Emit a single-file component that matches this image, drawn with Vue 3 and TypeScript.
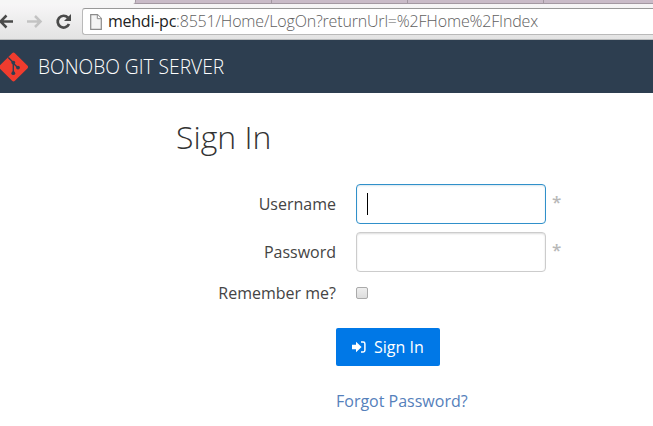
<script setup lang="ts">
import { ref } from 'vue'

const username = ref('')
const password = ref('')
const remember = ref(false)
const host = 'mehdi-pc'
const path = ':8551/Home/LogOn?returnUrl=%2FHome%2FIndex'
</script>

<template>
  <div class="window">
    <div class="tabs"><i class="active"></i><i class="tab"></i><i class="tab"></i><i class="tab"></i></div>
    <div class="toolbar">
      <svg class="nav" viewBox="0 0 80 30" width="80" height="30" fill="none" stroke-linejoin="miter">
        <path d="M13 13.5H1M6.5 7.5L.5 13.5l6 6" stroke="#4a4a4a" stroke-width="2.5" />
        <path d="M27 13.5h13M35 8l5.5 5.5L35 19" stroke="#c3c3c3" stroke-width="2.5" />
        <path d="M68 9.7A5.9 5.9 0 1 0 69 16" stroke="#4a4a4a" stroke-width="2.7" />
        <path d="M71 6v7h-7z" fill="#4a4a4a" />
      </svg>
      <div class="address">
        <svg class="page" viewBox="0 0 12 16" width="12" height="16">
          <path d="M.7.7h6.8l3.8 3.8v10.8H.7z" fill="#f4f4f4" stroke="#8b8b8b" stroke-width="1.2" />
          <path d="M7.3.7v4h4" fill="#fff" stroke="#8b8b8b" />
        </svg>
        <span class="url"><b>{{ host }}</b>{{ path }}</span>
      </div>
    </div>
    <header>
      <svg class="logo" viewBox="0 0 28 30" width="28" height="30">
        <rect x="2.7" y="4.2" width="21.6" height="21.6" rx="2" transform="rotate(45 13.5 15)" fill="#f03c2e" />
        <path d="M8.3 5.6l5 5v10.6M13.3 11.2l4.6 4.6" fill="none" stroke="#2d3e50" stroke-width="1.4" />
        <circle cx="13.3" cy="10.6" r="1.9" fill="#2d3e50" />
        <circle cx="13.3" cy="21.2" r="1.9" fill="#2d3e50" />
        <circle cx="18" cy="15.6" r="1.9" fill="#2d3e50" />
      </svg>
      <span class="brand">BONOBO GIT SERVER</span>
    </header>
    <main>
      <h1>Sign In</h1>
      <form @submit.prevent>
        <div class="row">
          <label for="user"><span>Username</span></label>
          <div class="field focused"><input id="user" v-model="username" type="text" /><i class="caret"></i></div>
          <span class="star">*</span>
        </div>
        <div class="row">
          <label for="pass"><span>Password</span></label>
          <div class="field"><input id="pass" v-model="password" type="password" /></div>
          <span class="star">*</span>
        </div>
        <div class="row check">
          <label for="keep"><span>Remember me?</span></label>
          <input id="keep" v-model="remember" type="checkbox" />
        </div>
        <button type="submit">
          <svg viewBox="0 0 14 12" width="14" height="12">
            <path d="M0 3.8h4V.8L9.6 6 4 11.2v-3H0z" fill="#fff" />
            <path d="M9 1h2.2q1.7 0 1.7 1.7v6.6q0 1.7-1.7 1.7H9" fill="none" stroke="#fff" stroke-width="1.5" />
          </svg>
          <span>Sign In</span>
        </button>
        <a href="#">Forgot Password?</a>
      </form>
    </main>
  </div>
</template>

<style>
body { margin: 0; background: #fff; }
</style>
<style scoped>
* { box-sizing: border-box; }
.window { width: 653px; height: 426px; overflow: hidden; font: 16px/24px "Open Sans", sans-serif; color: #444; background: #fff; }
.tabs { height: 4px; display: flex; background: #c9bbc8; border-bottom: 1px solid #a398a2; }
.active { width: 136px; height: 4px; background: #f6f6f6; border-right: 1px solid #a398a2; border-bottom-right-radius: 3px; }
.tab { width: 136px; height: 3px; border-right: 1px solid #a398a2; }
.toolbar { height: 36px; display: flex; padding-top: 4px; background: linear-gradient(#f7f6f7, #e3e3e3); border-bottom: 1px solid #b8babb; }
.nav { flex: none; margin-right: 2px; }
.address { flex: 1; height: 27px; display: flex; align-items: center; padding-left: 7px; background: #fff; border: 1px solid #b9b9b9; border-top-color: #999; border-right: 0; border-radius: 3px 0 0 3px; }
.page { flex: none; margin-right: 6px; }
.url { white-space: nowrap; color: #606060; font: 300 16px/22px "Open Sans", sans-serif; letter-spacing: -.17px; padding-bottom: 2px; }
.url b { color: #222; font-weight: 400; letter-spacing: -.25px; }
header { height: 53px; display: flex; align-items: center; background: #2d3e50; color: #fff; }
.logo { flex: none; margin-right: 10px; }
.brand { font-size: 19.2px; font-weight: 300; white-space: nowrap; }
main { padding: 22px 0 0 176px; }
h1 { margin: 0 0 25px; font-size: 32px; line-height: 44px; font-weight: 300; color: #333; }
form { display: flex; flex-direction: column; align-items: flex-start; }
.row { display: flex; align-items: center; height: 40px; margin-bottom: 8px; }
label { width: 160px; margin-right: 20px; text-align: right; white-space: nowrap; }
.field { width: 190px; height: 40px; display: flex; align-items: center; padding-left: 10px; border: 1px solid #ccc; border-radius: 4px; box-shadow: inset 0 1px 2px #ddd; }
.field input { order: 2; width: 160px; border: 0; outline: 0; background: transparent; font: inherit; }
.focused { border-color: #3090ca; box-shadow: inset 0 1px 2px #d8e6ee; }
.caret { width: 1px; height: 22px; background: #000; }
.star { align-self: flex-start; margin: 6px 0 0 6px; color: #b8b8b8; font-size: 17px; font-weight: 600; }
.check { height: 24px; margin: 1px 0 23px; }
.check input { appearance: none; width: 12px; height: 12px; margin: 0; border: 1px solid #aaa; border-radius: 2px; background: linear-gradient(#eee, #ddd); }
button { width: 104px; height: 38px; display: flex; align-items: center; margin: 0 0 23px 160px; padding: 0 0 0 16px; border: 0; border-radius: 2px; background: #0078e7; color: #fff; font: inherit; }
button svg { flex: none; margin-right: 8px; }
a { margin-left: 160px; color: #5580bb; text-decoration: none; white-space: nowrap; }
</style>
